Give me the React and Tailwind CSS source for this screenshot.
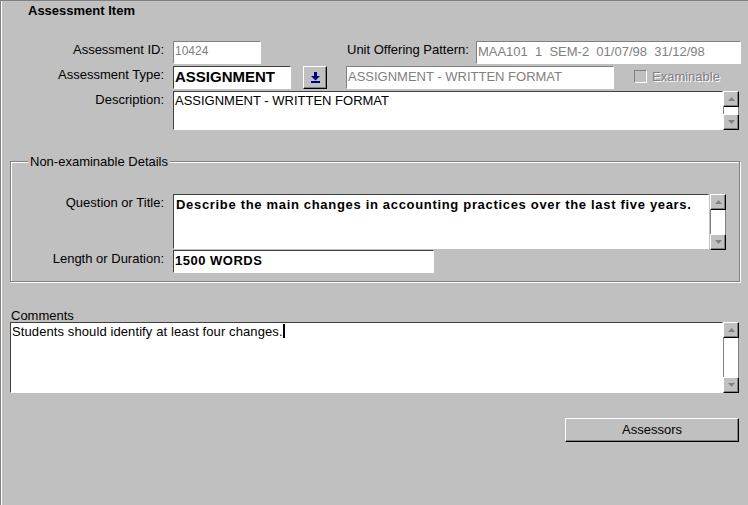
import React from "react";

const sunken = "border-t border-l border-t-[#404040] border-l-[#404040] border-b border-r border-b-[#ffffff] border-r-[#ffffff]";
const sunkenSoft = "border-t border-l border-t-[#808080] border-l-[#808080] border-b border-r border-b-[#ffffff] border-r-[#ffffff]";
const raised = "border-t border-l border-t-[#ffffff] border-l-[#ffffff] border-b border-r border-b-[#000000] border-r-[#000000] shadow-[inset_-1px_-1px_0_#808080]";

function Arrow({ up }) {
  return (
    <svg width="7" height="4" viewBox="0 0 7 4">
      {up ? <polygon points="0,4 7,4 3.5,0" fill="#808080" /> : <polygon points="0,0 7,0 3.5,4" fill="#808080" />}
    </svg>
  );
}

function ScrollBar({ height }) {
  return (
    <div className="flex flex-col w-[16px] shrink-0" style={{ height }}>
      <div className={`h-[16px] w-[16px] bg-[#c0c0c0] flex items-center justify-center ${raised}`}>
        <Arrow up />
      </div>
      <div className="flex-1 bg-[#ffffff] border-l border-r border-[#808080]" />
      <div className={`h-[16px] w-[16px] bg-[#c0c0c0] flex items-center justify-center ${raised}`}>
        <Arrow />
      </div>
    </div>
  );
}

function Label({ children, w = "w-[164px]" }) {
  return <div className={`${w} shrink-0 text-right pt-[1px] leading-[15px]`}>{children}</div>;
}

export default function App() {
  return (
    <div
      className="w-[748px] h-[505px] bg-[#c0c0c0] text-[13px] text-black border-l border-t border-[#808080] overflow-hidden"
      style={{ fontFamily: '"Liberation Sans", Arial, sans-serif' }}
    >
      <div className="h-full border-l border-[#ffffff]">
        <div className="pl-[26px] pt-[1px] font-bold text-[13px] leading-[17px]">Assessment Item</div>

        {/* Row 1 */}
        <div className="flex mt-[22px] h-[23px] -ml-[2px]">
          <Label>Assessment ID:</Label>
          <div className={`ml-[9px] w-[88px] h-[23px] bg-[#ffffff] ${sunkenSoft} px-[1px] leading-[19px] text-[#808080] text-[12px]`}>10424</div>
          <div className="ml-[86px] pt-[1px] leading-[15px]">Unit Offering Pattern:</div>
          <div className={`ml-[7px] w-[265px] h-[23px] bg-[#ffffff] ${sunkenSoft} px-[1px] leading-[19px] text-[#808080] whitespace-pre`}>MAA101  1  SEM-2  01/07/98  31/12/98</div>
        </div>

        {/* Row 2 */}
        <div className="flex mt-[2px] h-[23px] -ml-[2px]">
          <Label>Assessment Type:</Label>
          <div className={`ml-[9px] w-[118px] h-[23px] bg-[#ffffff] ${sunken} px-[1px] leading-[19px] font-bold text-[15px]`}>ASSIGNMENT</div>
          <div className={`ml-[12px] w-[24px] h-[23px] bg-[#c0c0c0] ${raised} flex items-center justify-center`}>
            <svg width="9" height="11" viewBox="0 0 9 11">
              <rect x="3" y="0" width="3" height="5" fill="#000080" />
              <polygon points="0,4 9,4 4.5,8.5" fill="#000080" />
              <rect x="0" y="9" width="9" height="2" fill="#000080" />
            </svg>
          </div>
          <div className={`ml-[19px] w-[268px] h-[23px] bg-[#ffffff] ${sunkenSoft} px-[1px] leading-[19px] text-[#808080]`}>ASSIGNMENT - WRITTEN FORMAT</div>
          <div className="ml-[20px] flex items-center h-[21px] gap-[5px]">
            <div className={`w-[13px] h-[13px] bg-[#c0c0c0] ${sunkenSoft}`} />
            <span className="text-[#808080] [text-shadow:1px_1px_0_#ffffff]">Examinable</span>
          </div>
        </div>

        {/* Row 3 */}
        <div className="flex mt-[2px] -ml-[2px]">
          <Label>Description:</Label>
          <div className={`ml-[9px] w-[550px] h-[39px] bg-[#ffffff] ${sunken} px-[1px] leading-[17px]`}>ASSIGNMENT - WRITTEN FORMAT</div>
          <ScrollBar height={39} />
        </div>

        {/* Group box */}
        <div className="relative mt-[31px] ml-[8px] w-[730px] h-[121px] border border-[#808080] shadow-[1px_1px_0_#ffffff,inset_1px_1px_0_#ffffff]">
          <div className="absolute -top-[8px] left-[17px] bg-[#c0c0c0] px-[2px] leading-[15px]">Non-examinable Details</div>
          <div className="flex mt-[32px] -ml-[11px]">
            <Label>Question or Title:</Label>
            <div className={`ml-[9px] w-[536px] h-[55px] bg-[#ffffff] ${sunken} px-[2px] pt-[1px] font-bold text-[13px] leading-[18px] tracking-[0.68px]`}>
              Describe the main changes in accounting practices over the last five years.
            </div>
            <div className="ml-[1px]">
              <ScrollBar height={56} />
            </div>
          </div>
          <div className="flex mt-0 -ml-[11px]">
            <Label>Length or Duration:</Label>
            <div className={`ml-[9px] w-[261px] h-[23px] bg-[#ffffff] ${sunken} px-[1px] leading-[19px] font-bold text-[13px] tracking-[0.5px]`}>1500 WORDS</div>
          </div>
        </div>

        {/* Comments */}
        <div className="ml-[9px] mt-[27px] leading-[13px]">Comments</div>
        <div className="flex ml-[8px]">
          <div className={`w-[713px] h-[71px] bg-[#ffffff] ${sunken} px-[1px] leading-[18px] tracking-[0.1px]`}>
            Students should identify at least four changes.<span className="inline-block w-[2px] h-[14px] bg-black align-[-2px]" />
          </div>
          <ScrollBar height={71} />
        </div>

        {/* Assessors */}
        <div className="flex justify-end pr-[9px] mt-[25px]">
          <div className={`w-[174px] h-[24px] bg-[#c0c0c0] ${raised} flex items-center justify-center`}>Assessors</div>
        </div>
      </div>
    </div>
  );
}
